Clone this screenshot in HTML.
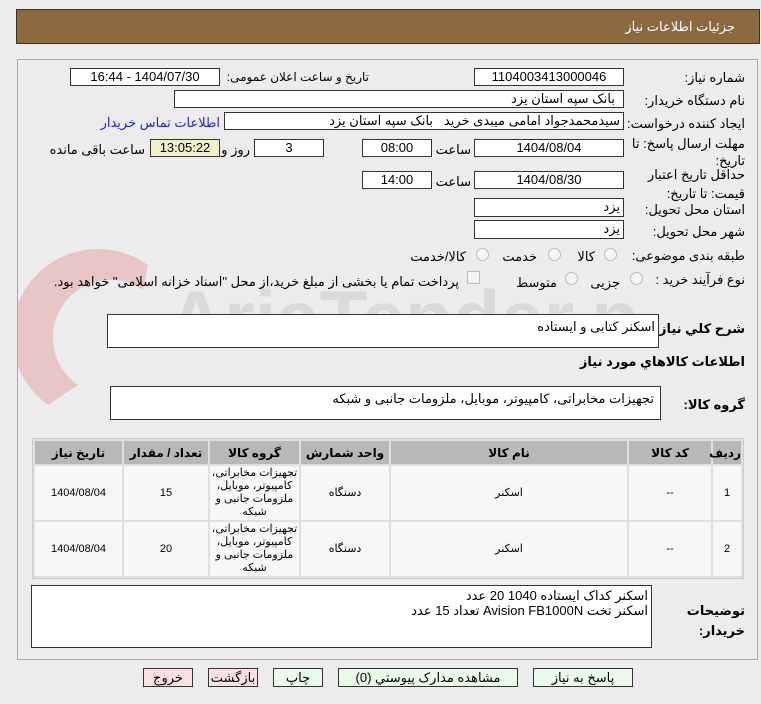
<!DOCTYPE html>
<html><head><meta charset="utf-8">
<style>
body{margin:0;width:761px;height:704px;background:#ececec;font-family:"Liberation Sans","DejaVu Sans",sans-serif;font-size:12px;color:#000;position:relative;overflow:hidden;direction:rtl}
.a{position:absolute;white-space:nowrap}
.hd{position:absolute;left:16px;top:9px;width:742px;height:33px;background:#8c6a40;border:1px solid #333}
.panel{position:absolute;left:17px;top:59px;width:739px;height:599px;border:1px solid #aaa;background:#ececec}
.in{position:absolute;background:#fff;border:1px solid #333;height:16px;line-height:16px;text-align:center;font-size:13px}
.lb{position:absolute;right:16px;font-size:13px;text-align:right;white-space:nowrap}
.ta{position:absolute;background:#fff;border:1px solid #333}
table{position:absolute;left:32px;top:438px;width:712px;border-collapse:separate;border-spacing:2px;background:#e0e0e0;border:1px solid #ccc;direction:rtl;table-layout:fixed}
th{background:#b8b8b8;height:23px;font-size:12px;padding:0;white-space:nowrap}
td{background:#f7f7f7;text-align:center;height:54px;font-size:11px;line-height:13px;padding:0;overflow:hidden}
.btn{position:absolute;top:668px;height:17px;border:1px solid #333;background:#e9fce9;text-align:center;line-height:17px;font-size:13px}
.rad{position:absolute;width:11px;height:11px;border:1px solid #bbb;border-radius:50%;background:#f4f4f4}
</style></head><body>
<div class="hd"><span class="a" style="right:24px;top:9px;color:#fff;font-size:13px">جزئیات اطلاعات نیاز</span></div>
<div class="panel"></div>

<svg class="a" style="left:18px;top:245px;direction:ltr" width="620" height="190"><path d="M30 160 A75 75 0 0 1 130 20 L125 45 A50 50 0 0 0 60 140 Z" fill="#e8b6b6" opacity=".7"/><text x="150" y="100" font-size="78" fill="#dadada" font-family="Liberation Sans" font-weight="bold">AriaTender.net</text></svg>

<span class="lb" style="top:70px">شماره نیاز:</span>
<div class="in" style="left:474px;top:68px;width:148px">1104003413000046</div>
<span class="a" style="right:392px;top:70px;font-size:12px">تاریخ و ساعت اعلان عمومی:</span>
<div class="in" style="left:70px;top:68px;width:148px">1404/07/30 - 16:44</div>

<span class="lb" style="top:93px">نام دستگاه خریدار:</span>
<div class="in" style="left:174px;top:90px;width:448px;text-align:right"><span style="margin-right:8px">بانک سپه استان یزد</span></div>

<span class="lb" style="top:116px">ایجاد کننده درخواست:</span>
<div class="in" style="left:224px;top:112px;width:398px;text-align:right;overflow:hidden"><span style="margin-right:3px">سیدمحمدجواد امامی میبدی خرید &nbsp; بانک سپه استان یزد</span></div>
<span class="a" style="right:541px;top:115px;color:#2222dd;font-size:13px">اطلاعات تماس خریدار</span>

<span class="lb" style="top:135px;line-height:17px">مهلت ارسال پاسخ: تا<br>تاریخ:</span>
<div class="in" style="left:474px;top:139px;width:148px">1404/08/04</div>
<span class="a" style="right:290px;top:142px;font-size:13px">ساعت</span>
<div class="in" style="left:362px;top:139px;width:68px">08:00</div>
<div class="in" style="left:254px;top:139px;width:68px">3</div>
<span class="a" style="right:511px;top:142px;font-size:13px">روز و</span>
<div class="in" style="left:150px;top:139px;width:68px;background:#f2f0c8">13:05:22</div>
<span class="a" style="right:616px;top:142px;font-size:13px">ساعت باقی مانده</span>

<span class="lb" style="top:165px;line-height:19px">حداقل تاریخ اعتبار<br>قیمت: تا تاریخ:</span>
<div class="in" style="left:474px;top:171px;width:148px">1404/08/30</div>
<span class="a" style="right:290px;top:174px;font-size:13px">ساعت</span>
<div class="in" style="left:362px;top:171px;width:68px">14:00</div>

<span class="lb" style="top:202px">استان محل تحویل:</span>
<div class="in" style="left:474px;top:198px;width:148px;text-align:right;height:17px"><span style="margin-right:3px">یزد</span></div>
<span class="lb" style="top:224px">شهر محل تحویل:</span>
<div class="in" style="left:474px;top:220px;width:148px;text-align:right;height:17px"><span style="margin-right:3px">یزد</span></div>

<span class="lb" style="top:248px">طبقه بندی موضوعی:</span>
<div class="rad" style="left:604px;top:248px"></div><span class="a" style="right:166px;top:249px;font-size:13px">کالا</span>
<div class="rad" style="left:548px;top:248px"></div><span class="a" style="right:224px;top:249px;font-size:13px">خدمت</span>
<div class="rad" style="left:476px;top:248px"></div><span class="a" style="right:295px;top:249px;font-size:13px">کالا/خدمت</span>

<span class="lb" style="top:272px">نوع فرآیند خرید :</span>
<div class="rad" style="left:630px;top:272px"></div><span class="a" style="right:141px;top:275px;font-size:13px">جزیی</span>
<div class="rad" style="left:565px;top:272px"></div><span class="a" style="right:204px;top:275px;font-size:13px">متوسط</span>
<div class="a" style="left:467px;top:271px;width:11px;height:11px;border:1px solid #bbb;background:#f4f4f4"></div>
<span class="a" style="right:302px;top:274px;font-size:13px">پرداخت تمام یا بخشی از مبلغ خرید،از محل "اسناد خزانه اسلامی" خواهد بود.</span>

<span class="lb" style="top:321px;font-weight:bold">شرح کلي نیاز:</span>
<div class="ta" style="left:107px;top:314px;width:550px;height:32px"><span class="a" style="right:3px;top:4px;font-size:13px">اسکنر کتابی و ایستاده</span></div>
<span class="lb" style="top:354px;font-weight:bold">اطلاعات کالاهاي مورد نیاز</span>

<span class="lb" style="top:397px;font-weight:bold">گروه کالا:</span>
<div class="ta" style="left:110px;top:386px;width:549px;height:32px"><span class="a" style="right:6px;top:4px;font-size:13px">تجهیزات مخابراتی، کامپیوتر، موبایل، ملزومات جانبی و شبکه</span></div>

<table>
<colgroup><col style="width:28px"><col style="width:82px"><col style="width:236px"><col style="width:88px"><col style="width:89px"><col style="width:84px"><col></colgroup>
<tr><th>ردیف</th><th>کد کالا</th><th>نام کالا</th><th>واحد شمارش</th><th>گروه کالا</th><th>تعداد / مقدار</th><th>تاریخ نیاز</th></tr>
<tr><td>1</td><td>--</td><td>اسکنر</td><td>دستگاه</td><td>تجهیزات مخابراتی،<br>کامپیوتر، موبایل،<br>ملزومات جانبی و<br>شبکه</td><td>15</td><td>1404/08/04</td></tr>
<tr><td>2</td><td>--</td><td>اسکنر</td><td>دستگاه</td><td>تجهیزات مخابراتی،<br>کامپیوتر، موبایل،<br>ملزومات جانبی و<br>شبکه</td><td>20</td><td>1404/08/04</td></tr>
</table>

<span class="lb" style="top:601px;font-weight:bold;line-height:20px">توضیحات<br>خریدار:</span>
<div class="ta" style="left:31px;top:585px;width:619px;height:61px"><span class="a" style="right:3px;top:2px;font-size:13px;line-height:15px">اسکنر کداک ایستاده 1040 20 عدد<br>اسکنر تخت Avision FB1000N تعداد 15 عدد</span></div>

<div class="btn" style="left:533px;width:98px">پاسخ به نیاز</div>
<div class="btn" style="left:338px;width:178px">مشاهده مدارک پیوستي (0)</div>
<div class="btn" style="left:273px;width:48px">چاپ</div>
<div class="btn" style="left:208px;width:48px;background:#fbe0e0">بازگشت</div>
<div class="btn" style="left:143px;width:48px;background:#fbe0e0">خروج</div>
</body></html>
